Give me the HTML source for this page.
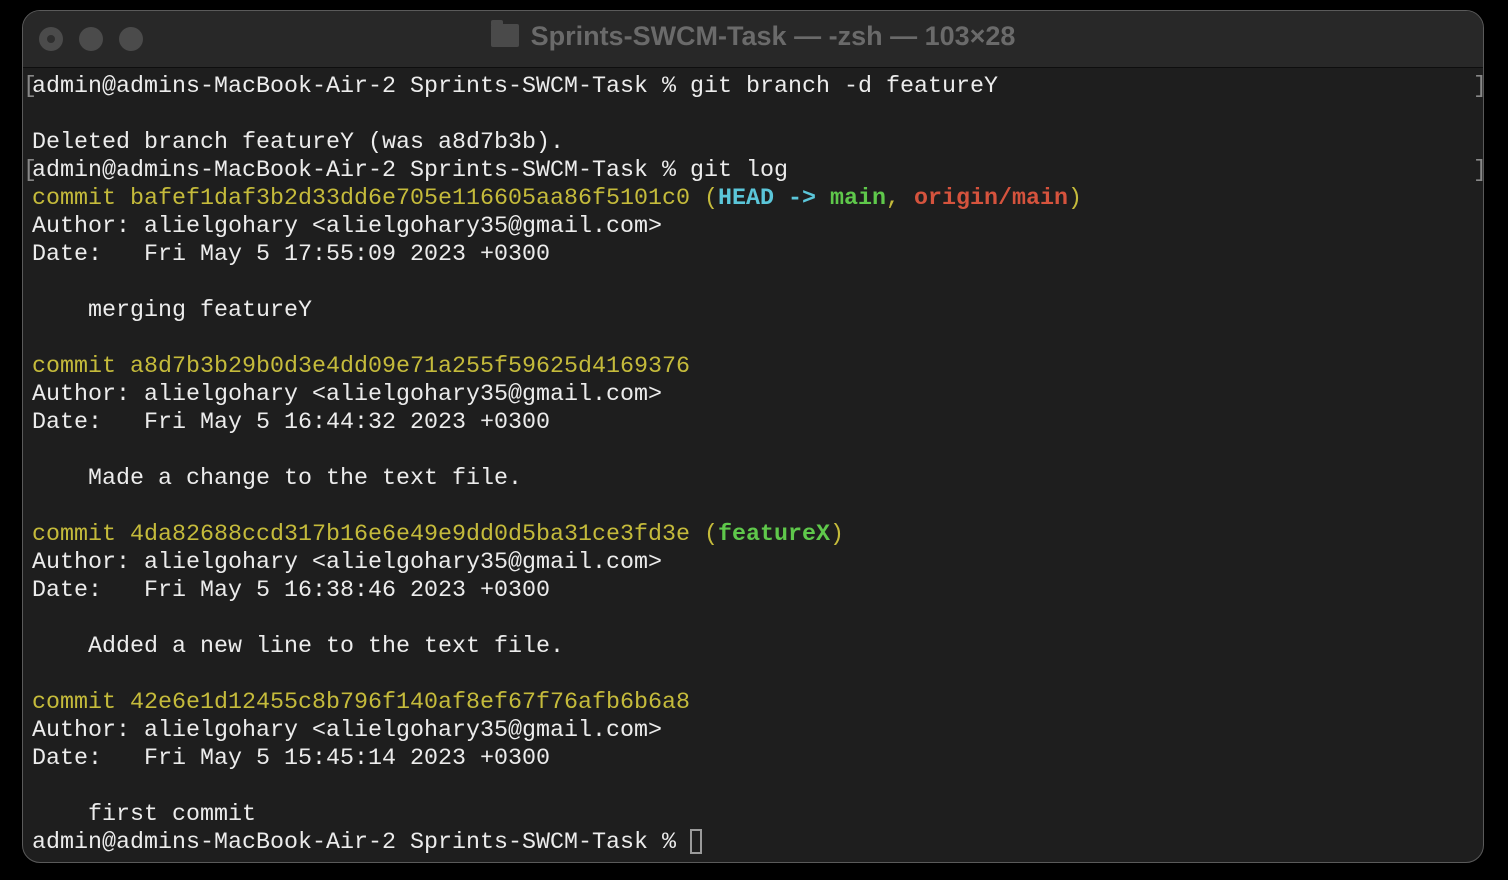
<!DOCTYPE html>
<html><head><meta charset="utf-8"><style>
html,body{margin:0;padding:0;background:#000;width:1508px;height:880px;overflow:hidden}
.win{position:absolute;left:22px;top:10px;width:1462px;height:853px;background:#1e1e1e;border:1px solid #5a5a5a;border-radius:18px;overflow:hidden;box-sizing:border-box}
.tb{position:absolute;left:0;top:0;right:0;height:56px;background:#282828;border-bottom:1px solid #0e0e0e}
.dot{position:absolute;top:16px;width:24px;height:24px;border-radius:50%;background:#4b4b4b}
.dot.c::after{content:"";position:absolute;left:8px;top:8px;width:8px;height:8px;border-radius:50%;background:#2e2e2e}
.title{position:absolute;left:0;right:0;top:10px;text-align:center;font:bold 27px "Liberation Sans",sans-serif;color:#6a6a6a}
.folder{display:inline-block;width:28px;height:23px;background:#4a4a4a;border-radius:2px;vertical-align:-2px;margin-right:12px;position:relative}
.folder::before{content:"";position:absolute;left:0;top:-4px;width:12px;height:5px;background:#4a4a4a;border-radius:2px 2px 0 0}
pre{position:absolute;left:9px;top:62px;margin:0;font:23.33px/28px "Liberation Mono",monospace;color:#ececec;white-space:pre}
.y{color:#c5bb3b}.c{color:#5bc6d9;font-weight:bold}.g{color:#5fc84b;font-weight:bold}.r{color:#d5533d;font-weight:bold}
.br{position:absolute;color:#888;font:23.33px/28px "Liberation Mono",monospace}
.cur{display:inline-block;width:12px;height:25px;border:2px solid #9a9a9a;box-sizing:border-box;vertical-align:-6px}
</style></head><body>
<div class="win">
<div class="tb">
<div class="dot c" style="left:16px"></div><div class="dot" style="left:56px"></div><div class="dot" style="left:96px"></div>
<div class="title"><span class="folder"></span>Sprints-SWCM-Task — -zsh — 103×28</div>
</div>
<span class="br" style="left:0;top:62px">[</span><span class="br" style="left:1450px;top:62px">]</span>
<span class="br" style="left:0;top:146px">[</span><span class="br" style="left:1450px;top:146px">]</span>
<pre>admin@admins-MacBook-Air-2 Sprints-SWCM-Task % git branch -d featureY

Deleted branch featureY (was a8d7b3b).
admin@admins-MacBook-Air-2 Sprints-SWCM-Task % git log
<span class="y">commit bafef1daf3b2d33dd6e705e116605aa86f5101c0 (</span><span class="c">HEAD -&gt; </span><span class="g">main</span><span class="y">, </span><span class="r">origin/main</span><span class="y">)</span>
Author: alielgohary &lt;alielgohary35@gmail.com&gt;
Date:   Fri May 5 17:55:09 2023 +0300

    merging featureY

<span class="y">commit a8d7b3b29b0d3e4dd09e71a255f59625d4169376</span>
Author: alielgohary &lt;alielgohary35@gmail.com&gt;
Date:   Fri May 5 16:44:32 2023 +0300

    Made a change to the text file.

<span class="y">commit 4da82688ccd317b16e6e49e9dd0d5ba31ce3fd3e (</span><span class="g">featureX</span><span class="y">)</span>
Author: alielgohary &lt;alielgohary35@gmail.com&gt;
Date:   Fri May 5 16:38:46 2023 +0300

    Added a new line to the text file.

<span class="y">commit 42e6e1d12455c8b796f140af8ef67f76afb6b6a8</span>
Author: alielgohary &lt;alielgohary35@gmail.com&gt;
Date:   Fri May 5 15:45:14 2023 +0300

    first commit
admin@admins-MacBook-Air-2 Sprints-SWCM-Task % <span class="cur"></span></pre>
</div>
</body></html>
